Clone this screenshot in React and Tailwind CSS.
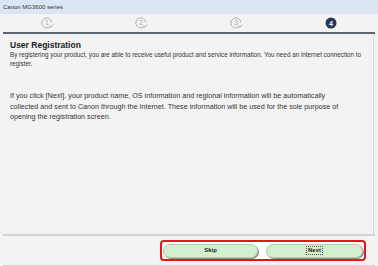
import React from 'react';

const StepDone = ({ n }) => (
    <svg width="13" height="12" viewBox="0 0 13 12">
        <path d="M9.6 9.2 A5 5 0 1 1 10.8 5.2" fill="none" stroke="#a8a8a8" strokeWidth="0.9" />
        <path d="M8.2 8.6 L9.8 10.4 L12.2 7.4" fill="none" stroke="#a8a8a8" strokeWidth="0.9" />
        <text x="6" y="8.3" textAnchor="middle" fontSize="7" fill="#a8a8a8" fontFamily="Liberation Sans, sans-serif">{n}</text>
    </svg>
);

const StepCurrent = ({ n }) => (
    <svg width="12" height="12" viewBox="0 0 12 12">
        <circle cx="6" cy="6" r="5.5" fill="#26385a" />
        <text x="6" y="8.5" textAnchor="middle" fontSize="7" fontWeight="bold" fill="#fff" fontFamily="Liberation Sans, sans-serif">{n}</text>
    </svg>
);

const App = () => {
    return (
        <div className="w-[378px] h-[266px] bg-[#f3f3f3] flex flex-col overflow-hidden font-['Liberation_Sans',Arial,sans-serif] text-[#222]">
            {/* Title bar */}
            <div className="h-[14px] bg-[#dbe6f4] flex items-center px-[3px] text-[6px] text-[#333]">
                Canon MG3600 series
            </div>

            {/* Steps */}
            <div className="h-[18px] grid grid-cols-4 items-center justify-items-center">
                <StepDone n="1" />
                <StepDone n="2" />
                <StepDone n="3" />
                <StepCurrent n="4" />
            </div>
            <div className="mx-[3px] h-[2px] bg-[#5d6672]"></div>

            {/* Content */}
            <div className="flex-1 ml-[3px] mr-[4px] border-r border-[#d6d6d6] px-[7px] pt-[5px]">
                <h1 className="text-[8.5px] font-bold text-[#1a1a1a] leading-[12px]">User Registration</h1>
                <p className="text-[6.3px] leading-[8.5px] text-[#333] pr-[4px]">
                    By registering your product, you are able to receive useful product and service information. You need an internet connection to register.
                </p>
                <p className="mt-[23px] text-[7.2px] leading-[10.5px] text-[#333] pr-[13px]">
                    If you click [Next], your product name, OS information and regional information will be automatically collected and sent to Canon through the Internet. These information will be used for the sole purpose of opening the registration screen.
                </p>
            </div>
            <div className="mx-[3px] h-[2px] bg-[#d4d4d4]"></div>

            {/* Footer */}
            <div className="h-[29px] flex items-center justify-end pr-[12px]">
                <div className="w-[206px] h-[21px] border-[2.5px] border-[#e8141a] rounded-[4px] bg-white flex items-center justify-between px-[1px]">
                    <button className="w-[95px] h-[14px] rounded-full bg-[#d3efcd] border border-[#b7c7b3] shadow-[1px_1px_0_#8f958e] text-[6px] font-bold text-[#222] flex items-center justify-center">
                        Skip
                    </button>
                    <button className="w-[97px] h-[14px] rounded-full bg-[#d3efcd] border border-[#b7c7b3] shadow-[1px_1px_0_#8f958e] text-[6px] font-bold text-[#222] flex items-center justify-center">
                        <span className="border border-dotted border-[#555] px-[1px] leading-[7px]">Next</span>
                    </button>
                </div>
            </div>
            <div className="mx-[3px] h-[1px] bg-[#d4d4d4]"></div>
        </div>
    );
};

export default App;
